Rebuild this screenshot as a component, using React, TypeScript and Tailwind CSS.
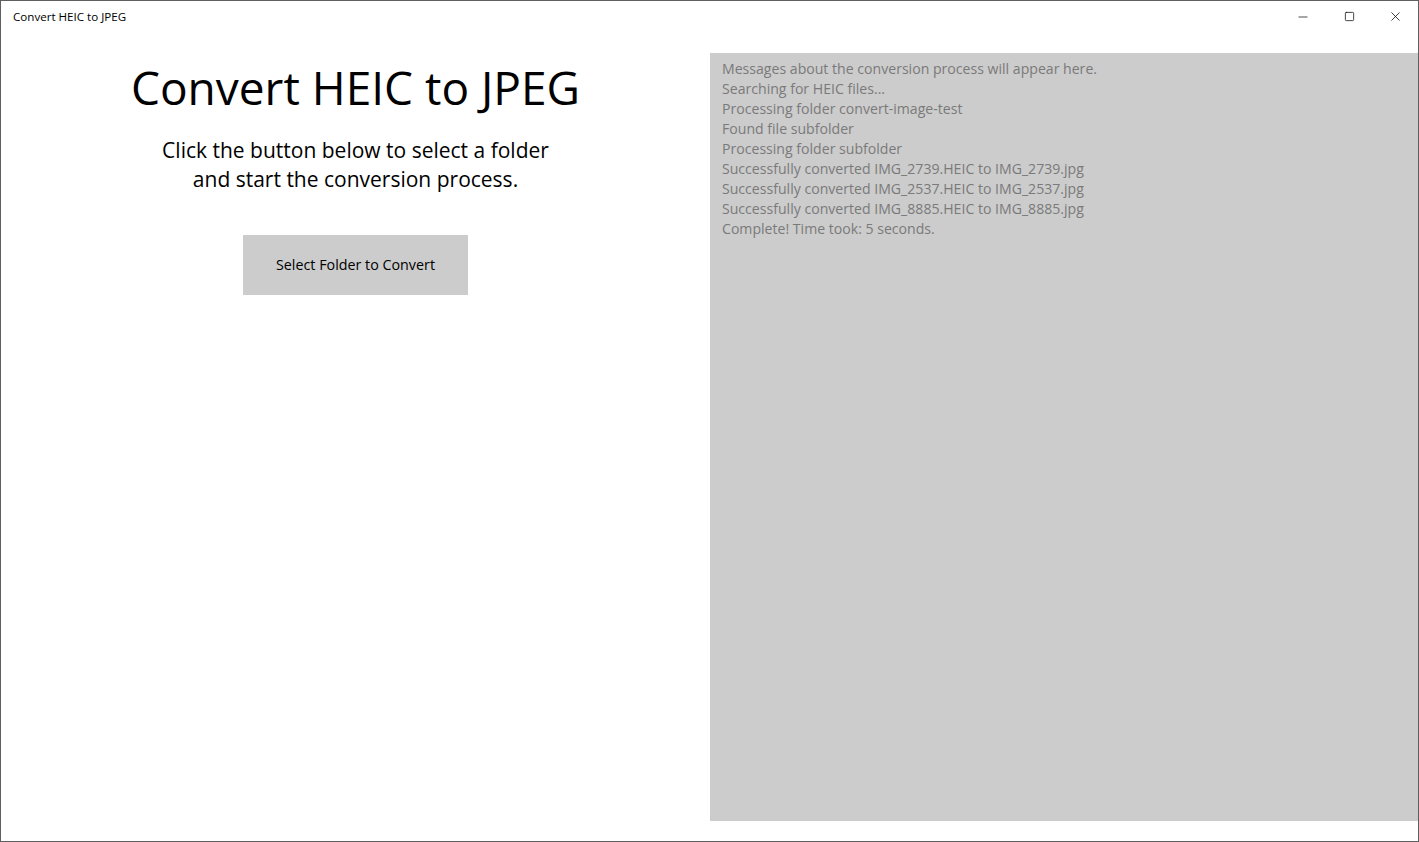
import { Minus, Square, X } from 'lucide-react'

const messages = [
  'Messages about the conversion process will appear here.',
  'Searching for HEIC files...',
  'Processing folder convert-image-test',
  'Found file subfolder',
  'Processing folder subfolder',
  'Successfully converted IMG_2739.HEIC to IMG_2739.jpg',
  'Successfully converted IMG_2537.HEIC to IMG_2537.jpg',
  'Successfully converted IMG_8885.HEIC to IMG_8885.jpg',
  'Complete! Time took: 5 seconds.',
]

export default function App() {
  return (
    <div
      className="flex h-[842px] w-[1419px] flex-col overflow-hidden border border-[#5f5f5f] bg-white text-black"
      style={{ fontFamily: '"Open Sans", "Noto Sans", sans-serif' }}
    >
      {/* Title bar */}
      <div className="flex h-[31px] shrink-0 items-center justify-between">
        <span className="pl-3 text-[11.6px] leading-none">Convert HEIC to JPEG</span>
        <div className="flex h-full">
          <div className="flex w-[46px] items-center justify-center">
            <Minus className="h-[14px] w-[14px]" strokeWidth={1.2} />
          </div>
          <div className="flex w-[46px] items-center justify-center">
            <Square className="h-[11px] w-[11px]" strokeWidth={1.6} />
          </div>
          <div className="flex w-[46px] items-center justify-center">
            <X className="h-[15px] w-[15px]" strokeWidth={1.2} />
          </div>
        </div>
      </div>

      {/* Body */}
      <div className="flex flex-1 pt-[21px] pb-5">
        {/* Left */}
        <div className="flex w-[709px] flex-col items-center">
          <h1 className="mt-[2px] text-[46px] leading-[64px] font-normal">Convert HEIC to JPEG</h1>
          <p className="mt-[17px] text-center text-[21px] leading-[29px]">
            Click the button below to select a folder
            <br />
            and start the conversion process.
          </p>
          <button className="mt-[41px] h-[60px] w-[225px] bg-[#cccccc] text-[14.3px]">
            Select Folder to Convert
          </button>
        </div>

        {/* Log panel */}
        <div className="flex-1 bg-[#cccccc] px-3 pt-[6px]">
          {messages.map((m) => (
            <div key={m} className="text-[14.1px] leading-[20px] text-[#7a7a7a]">
              {m}
            </div>
          ))}
        </div>
      </div>
    </div>
  )
}
